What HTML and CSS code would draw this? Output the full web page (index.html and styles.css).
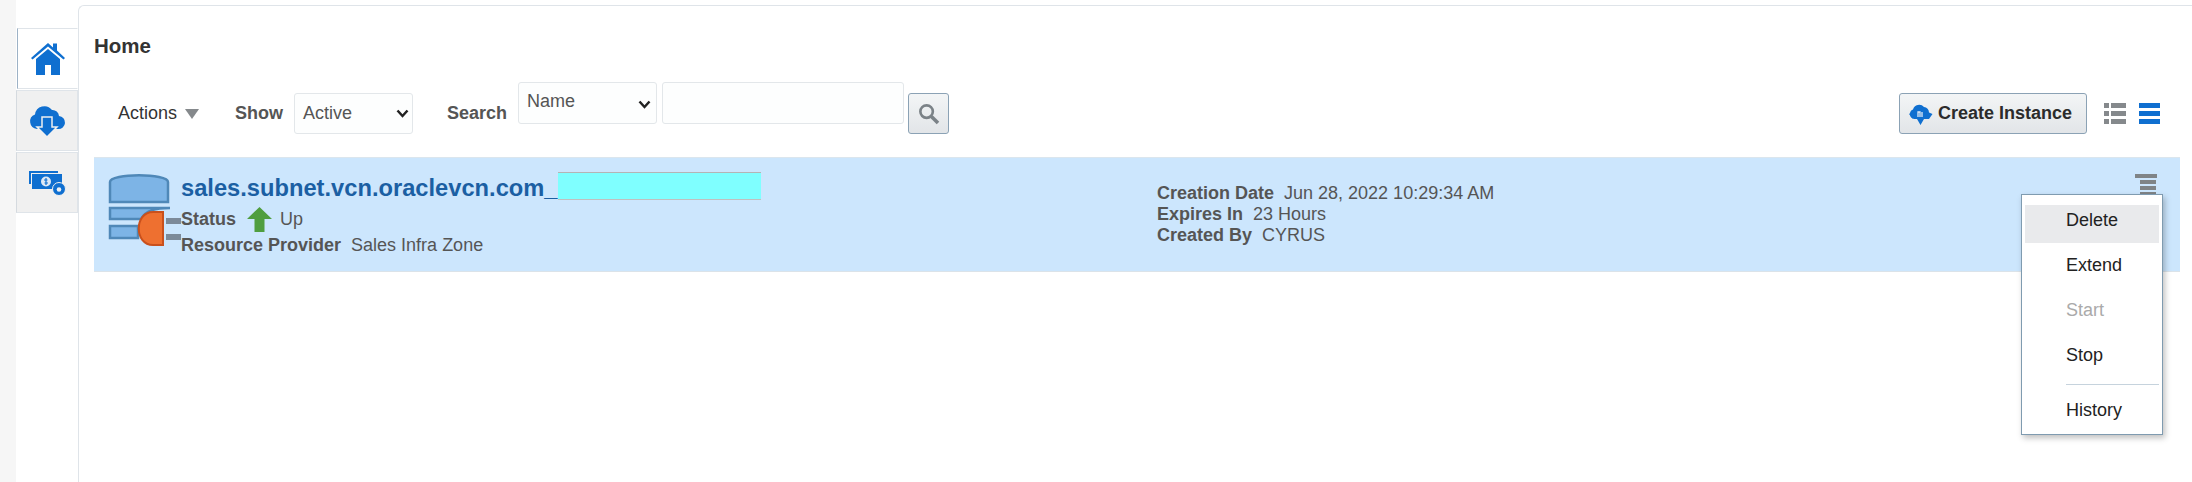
FILE: index.html
```html
<!DOCTYPE html>
<html lang="en">
<head>
    <meta charset="UTF-8">
    <title>Home</title>
    <link rel="stylesheet" href="styles.css">
</head>
<body>
    <div class="rail"></div>

    <nav class="tabs">
        <div class="tab tab-active">
            <svg width="36" height="34" viewBox="0 0 36 34"><path d="M1 16 18 1l5 4.400V1.500h4v7L35 16l-1.500 1.500L18 4.500 2.500 17.500z" fill="#0f6fd0"/><path d="M6 17 18 7l12 10v16H21V23h-6v10H6z" fill="#0f6fd0"/></svg>
        </div>
        <div class="tab">
            <svg width="38" height="34" viewBox="0 0 38 34"><path d="M9 25a7.500 7.500 0 0 1-2-14.500A9.500 9.500 0 0 1 24 6a6.500 6.500 0 0 1 7 6 6.500 6.500 0 0 1-1 13z" fill="#0f6fd0"/><path d="M14 13h10v10h5L19 33 9 23h5z" fill="#0f6fd0" stroke="#f0f0f0" stroke-width="1.500"/><path d="M16 15h6v10h3l-6 6-6-6h3z" fill="#0f6fd0"/></svg>
        </div>
        <div class="tab">
            <svg width="38" height="26" viewBox="0 0 38 26"><path d="M1 1h29v2H3v11H1z" fill="#0f6fd0"/><rect x="4" y="4" width="30" height="15" fill="#0f6fd0"/><circle cx="18" cy="11.500" r="5" fill="#dfe9f5"/><path d="M18 8v7M16 10h3.500M16.500 13H20" stroke="#0f6fd0" stroke-width="1.200"/><circle cx="31" cy="19" r="6.500" fill="#0f6fd0" stroke="#f0f0f0"/><circle cx="31" cy="19.500" r="2.300" fill="#f0f0f0"/></svg>
        </div>
    </nav>

    <main class="main">
        <h1 class="title">Home</h1>

        <div class="toolbar">
            <span class="actions">Actions <i class="caret"></i></span>
            <label class="tool-label tool-label-show">Show</label>
            <div class="fake-select select-show">Active<svg class="chev" width="13" height="9" viewBox="0 0 13 9"><path d="M1.500 1.500 6.500 7l5-5.500" fill="none" stroke="#222" stroke-width="2.500"/></svg></div>
            <label class="tool-label tool-label-search">Search</label>
            <div class="search-group">
                <div class="fake-select select-name">Name<svg class="chev" width="13" height="9" viewBox="0 0 13 9"><path d="M1.500 1.500 6.500 7l5-5.500" fill="none" stroke="#222" stroke-width="2.500"/></svg></div>
                <div class="search-input"></div>
            </div>
            <button class="search-btn">
                <svg width="24" height="24" viewBox="0 0 20 20"><circle cx="8" cy="8" r="5.200" fill="none" stroke="#7b8287" stroke-width="2.200"/><path d="m12 12 5.500 5.500" stroke="#7b8287" stroke-width="3"/></svg>
            </button>

            <div class="toolbar-right">
                <button class="create-btn">
                    <svg width="25" height="24" viewBox="0 0 25 24"><path d="M6 17a5 5 0 0 1-1-9.500A6.500 6.500 0 0 1 16 5a5.500 5.500 0 0 1 5 5.500L24.500 12 21 17z" fill="#0f6fd0"/><path d="M1 12l4-3v8zM9 17h7l-3.500 6z" fill="#0f6fd0"/><path d="M10 15v-5h2v5M14 15v-5" stroke="#dfe9f5" stroke-width="1.300" fill="none"/></svg>
                    Create Instance
                </button>
                <svg class="view-icon" width="22" height="21" viewBox="0 0 22 21"><path d="M0 0h5v5H0zM7 0h15v5H7zM0 8h5v5H0zM7 8h15v5H7zM0 16h5v5H0zM7 16h15v5H7z" fill="#85898c"/></svg>
                <svg class="view-icon" width="21" height="21" viewBox="0 0 21 21"><path d="M0 0h21v5H0zM0 8h21v5H0zM0 16h21v5H0z" fill="#0f6fd0"/></svg>
            </div>
        </div>

        <section class="row">
            <svg class="db-icon" width="64" height="72" viewBox="0 0 64 72">
                <path d="M2 8C2-1 60-1 60 8v20H2z" fill="#7db4e6" stroke="#4f88b8" stroke-width="2.500"/>
                <path d="M2 34h60c-14 0-24 2-29 11H2z" fill="#7db4e6" stroke="#4f88b8" stroke-width="2.500"/>
                <rect x="2" y="52" width="28" height="12" fill="#7db4e6" stroke="#4f88b8" stroke-width="2.500"/>
                <path d="M55 38H45C26 38 26 71 45 71h10z" fill="#ee7030" stroke="#c9501c" stroke-width="2"/>
                <path d="M58 44h15v6H58zM58 60h15v6H58z" fill="#7c8a99"/>
            </svg>

            <div class="row-info">
                <div class="row-name">
                    <a class="row-link">sales.subnet.vcn.oraclevcn.com_</a><span class="redacted"></span>
                </div>
                <div class="row-line row-status">
                    <b>Status</b>
                    <svg class="up-arrow" width="25" height="25" viewBox="0 0 25 25"><path d="M12.500 0 25 12h-7.500v13h-10V12H0z" fill="#4f9e3f"/></svg>
                    Up
                </div>
                <div class="row-line"><b>Resource Provider</b>&nbsp; Sales Infra Zone</div>
            </div>

            <div class="row-meta">
                <div class="row-line"><b>Creation Date</b>&nbsp; Jun 28, 2022 10:29:34 AM</div>
                <div class="row-line"><b>Expires In</b>&nbsp; 23 Hours</div>
                <div class="row-line"><b>Created By</b>&nbsp; CYRUS</div>
            </div>

            <svg class="row-menu" width="22" height="20" viewBox="0 0 22 20"><path d="M0 0h22v4H0zM5 6h16v4H5zM5 12h16v4H5zM5 18h16v2H5z" fill="#7f8487"/></svg>
        </section>

        <ul class="popup">
            <li class="popup-item popup-hover">Delete</li>
            <li class="popup-item">Extend</li>
            <li class="popup-item popup-disabled">Start</li>
            <li class="popup-item">Stop</li>
            <li class="popup-sep"></li>
            <li class="popup-item">History</li>
        </ul>
    </main>
</body>
</html>
```

FILE: styles.css
```css
html, body {
    margin: 0;
    height: 482px;
    overflow: hidden;
}
body {
    display: flex;
    background-color: #fff;
    font-family: "Liberation Sans", Arial, sans-serif;
    font-size: 18px;
    color: #333;
}
.rail {
    width: 16px;
    background-color: #f6f6f6;
}

/* left tabs */
.tabs {
    width: 62px;
    padding-top: 28px;
    flex-shrink: 0;
}
.tab {
    height: 61px;
    margin-bottom: 1px;
    display: flex;
    align-items: center;
    justify-content: center;
    background-color: #f0f0f0;
    border: 1px solid #dfe4e9;
    border-left: 1px solid #d5dadf;
    box-sizing: border-box;
}
.tab-active {
    background-color: #fff;
    border-left: 1px solid #9db2c6;
    border-right: 1px solid #fff;
    position: relative;
    left: 1px;
    margin-right: 1px;
}

/* main panel */
.main {
    flex: 1;
    position: relative;
    margin-top: 5px;
    padding: 0 12px 0 15px;
    border-top: 1px solid #dfe4e9;
    border-left: 1px solid #dfe4e9;
    border-top-left-radius: 6px;
}
.title {
    margin: 0;
    padding-top: 28px;
    font-size: 20.500px;
    line-height: 24px;
    color: #333;
}
.toolbar {
    display: flex;
    align-items: flex-start;
    height: 41px;
    margin-top: 35px;
}
.actions {
    margin-left: 24px;
    line-height: 41px;
    color: #333;
}
.caret {
    display: inline-block;
    width: 0;
    height: 0;
    margin-left: 3px;
    border-left: 7px solid transparent;
    border-right: 7px solid transparent;
    border-top: 10px solid #85898c;
}
.tool-label {
    font-weight: bold;
    line-height: 41px;
    color: #555;
}
.tool-label-show {
    margin-left: 36px;
    margin-right: 11px;
}
.tool-label-search {
    margin-left: 34px;
    margin-right: 11px;
}
.fake-select {
    display: flex;
    justify-content: space-between;
    box-sizing: border-box;
    background-color: #fdfefe;
    border: 1px solid #e3e7ea;
    border-radius: 3px;
    color: #555;
}
.select-show {
    width: 119px;
    height: 41px;
    padding: 0 3px 0 8px;
    align-items: center;
}
.search-group {
    display: flex;
    gap: 5px;
    margin-top: -11px;
}
.select-name {
    width: 139px;
    height: 42px;
    padding: 8px 5px 0 8px;
    align-items: flex-start;
}
.select-name .chev {
    margin-top: 9px;
}
.search-input {
    width: 242px;
    height: 42px;
    box-sizing: border-box;
    background-color: #fdfefe;
    border: 1px solid #e3e7ea;
    border-radius: 3px;
}
.search-btn {
    width: 41px;
    height: 41px;
    margin-left: 4px;
    padding: 0;
    display: flex;
    align-items: center;
    justify-content: center;
    background: linear-gradient(#f3f5f6, #e2e5e8);
    border: 1px solid #8ba2b5;
    border-radius: 3px;
}
.toolbar-right {
    display: flex;
    align-items: center;
    height: 41px;
    margin-left: auto;
    padding-right: 20px;
}
.create-btn {
    display: flex;
    align-items: center;
    gap: 5px;
    width: 188px;
    height: 41px;
    padding: 0 0 0 8px;
    box-sizing: border-box;
    background: linear-gradient(#f3f5f6, #e2e5e8);
    border: 1px solid #8ba2b5;
    border-radius: 3px;
    font-family: inherit;
    font-size: 18px;
    font-weight: bold;
    color: #2b2b2b;
}
.view-icon {
    margin-left: 17px;
}
.view-icon + .view-icon {
    margin-left: 13px;
}

/* selected row */
.row {
    display: flex;
    height: 115px;
    margin-top: 23px;
    box-sizing: border-box;
    padding: 17px 23px 0 14px;
    background-color: #cce6fd;
    border-top: 1px solid #dbe6ee;
    border-bottom: 1px solid #dbe3e9;
    color: #555;
    line-height: 22px;
}
.row-line b {
    color: #555;
}
.db-icon {
    flex-shrink: 0;
    margin-top: -1px;
    margin-right: 9px;
    overflow: visible;
}
.row-info {
    width: 976px;
    flex-shrink: 0;
    margin-top: -3px;
}
.row-name {
    display: flex;
    align-items: flex-start;
    height: 35px;
}
.row-link {
    font-size: 23.700px;
    font-weight: bold;
    line-height: 32px;
    color: #1b5fa3;
}
.redacted {
    display: block;
    width: 203px;
    height: 28px;
    background-color: #7fffff;
    border-top: 1px solid #b4b4b4;
    border-bottom: 1px solid #c0c0c0;
    box-sizing: border-box;
}
.row-status {
    display: flex;
    align-items: center;
    height: 25px;
    line-height: 25px;
}
.up-arrow {
    margin: 0 8px 0 11px;
}
.row-status + .row-line {
    line-height: 27px;
}
.row-meta {
    flex: 1;
    padding-top: 8px;
    line-height: 21px;
}
.row-menu {
    flex-shrink: 0;
    margin-top: -1px;
}

/* actions popup */
.popup {
    position: absolute;
    top: 188px;
    left: 1942px;
    width: 142px;
    height: 241px;
    margin: 0;
    padding: 10px 3px 0;
    box-sizing: border-box;
    list-style: none;
    background-color: #fff;
    border: 1px solid #7f9bb0;
    box-shadow: 2px 3px 6px rgba(0, 0, 0, 0.25);
}
.popup-item {
    height: 45px;
    line-height: 30px;
    padding-left: 41px;
    box-sizing: border-box;
    color: #222;
}
.popup-hover {
    height: 38px;
    margin-bottom: 7px;
    background-color: #e9eaec;
}
.popup-disabled {
    color: #aaa;
}
.popup-sep {
    height: 1px;
    margin: -1px 0 10px 41px;
    background-color: #c6d3dd;
}
```
